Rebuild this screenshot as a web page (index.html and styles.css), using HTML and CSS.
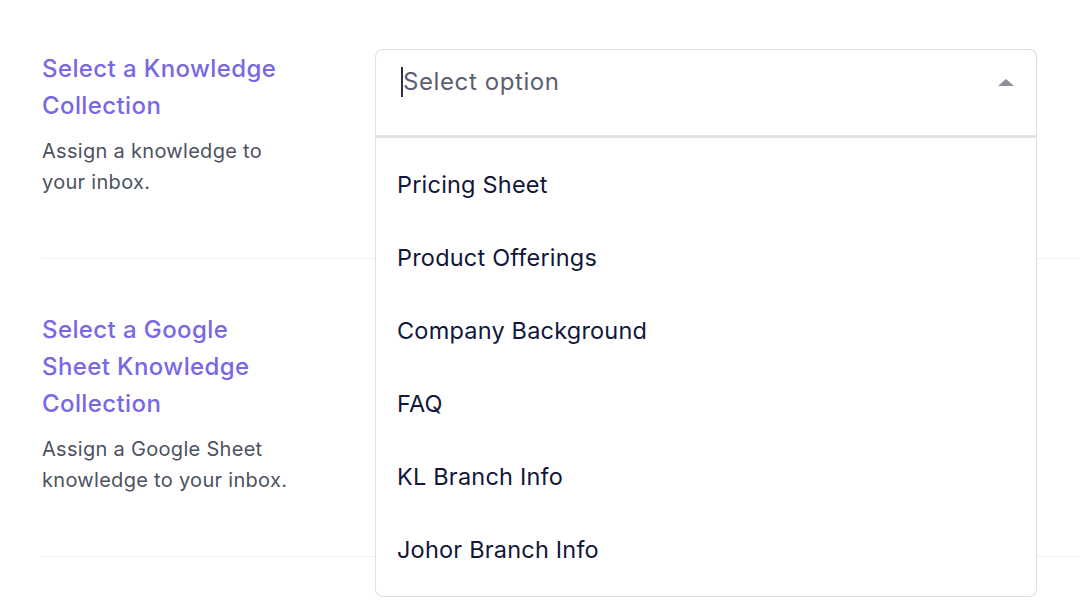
FILE: index.html
```html
<!DOCTYPE html>
<html lang="en">
<head>
  <meta charset="UTF-8" />
  <meta name="viewport" content="width=device-width, initial-scale=1.0"/>
  <title>Inbox Knowledge</title>
  <link rel="stylesheet" href="styles.css">
</head>
<body>
  <main class="settings">
    <!-- Knowledge collection -->
    <section class="setting-row">
      <div class="setting-info">
        <h3 class="setting-title">Select a Knowledge Collection</h3>
        <p class="setting-desc">Assign a knowledge to your inbox.</p>
      </div>
      <div class="select open">
        <div class="select-control">
          <span class="caret"></span>
          <span class="placeholder">Select option</span>
          <span class="arrow"></span>
        </div>
        <ul class="select-menu">
          <li>Pricing Sheet</li>
          <li>Product Offerings</li>
          <li>Company Background</li>
          <li>FAQ</li>
          <li>KL Branch Info</li>
          <li>Johor Branch Info</li>
        </ul>
      </div>
    </section>

    <!-- Google sheet knowledge -->
    <section class="setting-row">
      <div class="setting-info">
        <h3 class="setting-title">Select a Google Sheet Knowledge Collection</h3>
        <p class="setting-desc">Assign a Google Sheet knowledge to your inbox.</p>
      </div>
      <div></div>
    </section>
  </main>
</body>
</html>
```

FILE: styles.css
```css
html, body {
  min-height: 100vh;
}
body {
  margin: 0;
  background: #fff;
  font-family: Inter, "Noto Sans", sans-serif;
}
.settings {
  min-height: 100vh;
  padding-left: 42px;
}
.setting-row {
  display: grid;
  grid-template-columns: 333px 662px;
  padding: 50px 0 60px;
  border-bottom: 1px solid #eef0f3;
}
.setting-row + .setting-row {
  padding-top: 52px;
}
.setting-info {
  width: 258px;
}
.setting-title {
  margin: 0;
  font-size: 24px;
  line-height: 37px;
  font-weight: 500;
  color: #7868e6;
  letter-spacing: 0.4px;
}
.setting-desc {
  margin: 12px 0 0;
  font-size: 20px;
  line-height: 31px;
  color: #4d5261;
  letter-spacing: 0.3px;
}
.select {
  position: relative;
  height: 87px;
  margin-top: -1px;
}
.select-control {
  display: flex;
  align-items: center;
  height: 86px;
  padding: 0 22px 22px 25px;
  box-sizing: border-box;
  border: 1px solid #dcdfe5;
  border-bottom: none;
  border-radius: 8px 8px 0 0;
}
.caret {
  width: 2px;
  height: 30px;
  background: #2c3145;
}
.placeholder {
  flex: 1;
  font-size: 24px;
  letter-spacing: 0.6px;
  color: #5b6070;
}
.arrow {
  width: 0;
  height: 0;
  margin-top: 2px;
  border-left: 8px solid transparent;
  border-right: 8px solid transparent;
  border-bottom: 7px solid #8b8f99;
}
.select-menu {
  position: absolute;
  left: 0;
  right: 0;
  top: 86px;
  margin: 0;
  padding: 10px 0;
  list-style: none;
  background: #fff;
  border: 1px solid #dcdfe5;
  border-top: 3px solid #e2e4e9;
  border-radius: 0 0 8px 8px;
  z-index: 2;
}
.select-menu li {
  height: 73px;
  line-height: 73px;
  padding-left: 21px;
  font-size: 23.5px;
  letter-spacing: 0.2px;
  color: #11163a;
}
```
